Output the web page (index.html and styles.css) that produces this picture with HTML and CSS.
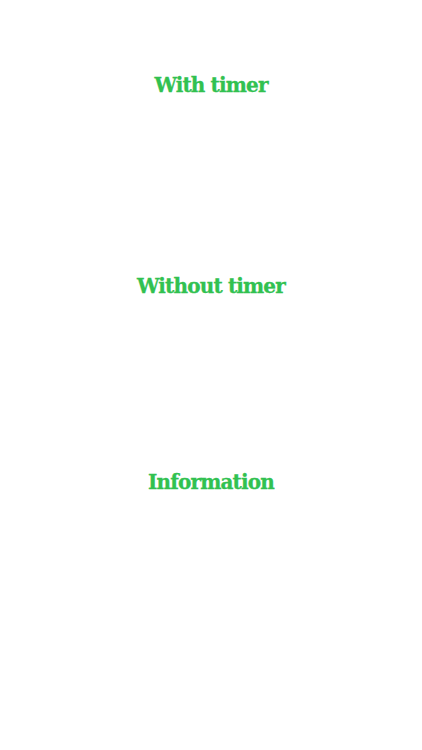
FILE: index.html
```html
<!DOCTYPE html>
<html>
<head>
<meta charset="utf-8">
<link rel="stylesheet" href="styles.css">
</head>
<body>
<main class="menu">
  <a class="item item-first">With timer</a>
  <a class="item item-second">Without timer</a>
  <a class="item item-third">Information</a>
</main>
</body>
</html>
```
FILE: styles.css
```css
html, body {
  margin: 0;
  padding: 0;
  background: #ffffff;
}
.menu {
  display: flex;
  flex-direction: column;
  align-items: center;
  padding-top: 73px;
}
.item {
  font-family: "DejaVu Serif", "Liberation Serif", serif;
  font-weight: bold;
  font-size: 20px;
  line-height: 24px;
  color: #31c150;
  letter-spacing: -0.85px;
  -webkit-text-stroke: 0.3px #31c150;
}
.item-second {
  margin-top: 177px;
}
.item-third {
  margin-top: 172px;
}
```
